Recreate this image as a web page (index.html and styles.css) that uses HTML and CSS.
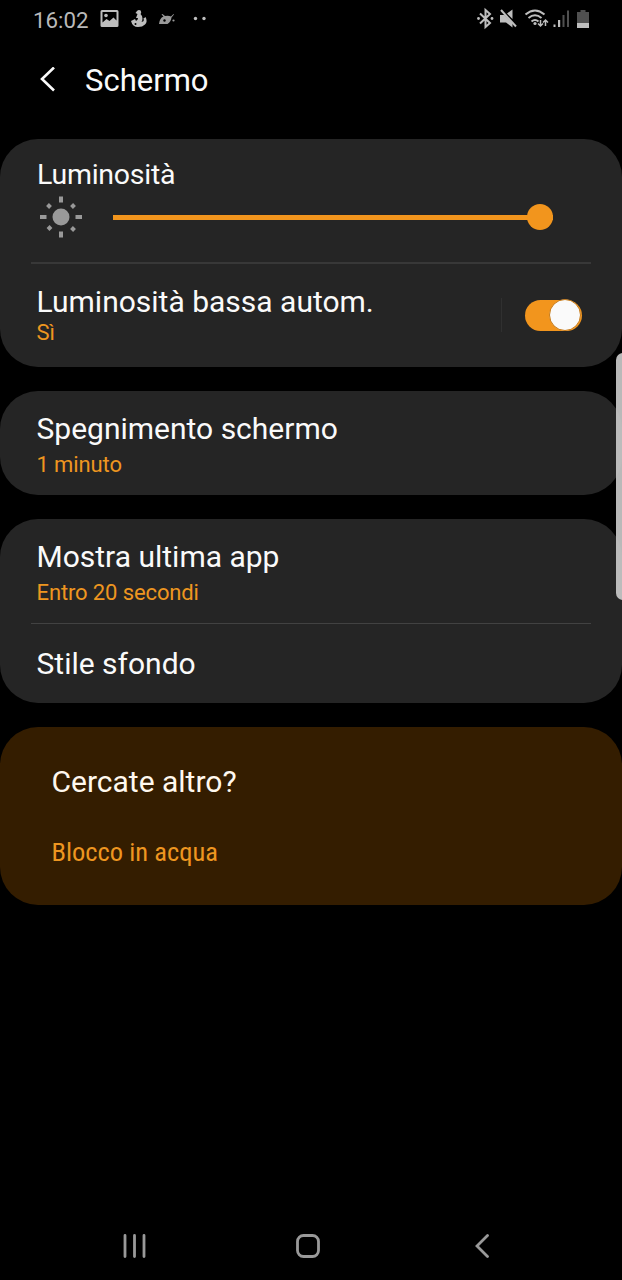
FILE: index.html
```html
<!DOCTYPE html>
<html lang="it">
<head>
    <meta charset="UTF-8">
    <meta name="viewport" content="width=device-width, initial-scale=1.0">
    <title>Schermo</title>
    <link rel="stylesheet" href="styles.css">
</head>
<body>

<div class="status-bar">
    <span class="time">16:02</span>
    <svg class="status-left" width="112" height="24" viewBox="98 7 112 24">
        <!-- picture -->
        <path fill-rule="evenodd" d="M102 10h15q1.500 0 1.500 1.500v14q0 1.500-1.500 1.500h-15q-1.500 0-1.500-1.500v-14q0-1.500 1.500-1.500zM102.500 12v10.500l4-3.500 3 2 4-3.500 3 3V12z"/>
        <circle cx="106" cy="15.500" r="1.800"/>
        <!-- swan -->
        <path d="M135.500 13l1.500-2q1-1 2-1 2.200 0 2.200 2.200 0 1-.7 1.800 2 1.500 2 4.500 0 2-1 3.500 2.500-.5 2.500-2.500l-1-.5 2.500-2q2.500 4.500-.5 7.500-2.500 2.500-7 2.500-5.500 0-7-6l4-2 1 2q2-1 2-3h-2l1.500-4z"/>
        <circle cx="135.500" cy="24" r="1" fill="#000"/>
        <!-- android head -->
        <path class="android" d="M159 24q.5-6 4.500-7.500l-2-2 1-.5 2.500 2q3.500-.8 6 .5l2.500-2.500.5.500-2.500 3q-.5 4-4 6.500z"/>
        <circle cx="164.500" cy="20.500" r="1.200" fill="#000"/>
        <circle class="android" cx="173.500" cy="20.500" r="1.100"/>
        <!-- more notifications -->
        <circle cx="195.500" cy="18.500" r="1.700"/>
        <circle cx="204" cy="18.500" r="1.700"/>
    </svg>
    <svg class="status-right" width="116" height="24" viewBox="476 7 116 24">
        <!-- bluetooth -->
        <path class="line" d="M480 13.500l10 9.500-4.500 4v-17l4.500 4-10 9.500"/>
        <circle cx="478.500" cy="18.500" r="1.400"/>
        <circle cx="492" cy="18.500" r="1.400"/>
        <!-- muted -->
        <path d="M500 15h4.500l8 8v4.500l-6.500-5h-6zM507 13.500l5.500-4v9.500z"/>
        <path class="line" d="M501 10l15 16.500"/>
        <!-- wifi -->
        <path class="line" d="M525.500 14.500q9.500-8 19 0M528.500 18q6.500-5.500 13 0M531.500 21.500q3.500-3 7 0"/>
        <circle cx="535" cy="23.500" r="1.600"/>
        <path class="thin" d="M540.500 20v6M538 23.500l2.500 2.500 2.500-2.500M545.500 26v-6M543 22.500l2.500-2.500 2.500 2.500"/>
        <!-- signal -->
        <path d="M553.500 24.500h2v2.500h-2zM558 20h2.200v7h-2.200z"/>
        <path class="dim" d="M562.500 15h2v12h-2zM567 10.500h2V27h-2z"/>
        <!-- battery -->
        <path class="dim" d="M577 12h3.500v-2h5v2h3.500v11h-12z"/>
        <path d="M577 23h12v5h-12z"/>
    </svg>
</div>

<div class="header">
    <svg width="16" height="26" viewBox="0 0 16 26">
        <path d="M14 .5L2 12l12 11.500"/>
    </svg>
    <h1>Schermo</h1>
</div>

<div class="card">
    <div class="brightness">
        <div class="label">Luminosità</div>
        <div class="slider-row">
            <svg width="42" height="42" viewBox="0 0 42 42">
                <circle cx="21" cy="21" r="8.500"/>
                <path class="ray" d="M21 .5v6M21 35.500v6M0 21h6.500M35.500 21H42"/>
                <path class="ray" d="M7.500 8.500l3 3M31.500 11.500l3-3M8 33.500l3-3M31.500 31.500l3 3"/>
            </svg>
            <div class="slider"><div class="thumb"></div></div>
        </div>
    </div>
    <div class="divider thick"></div>
    <div class="row auto">
        <div>
            <div class="title">Luminosità bassa autom.</div>
            <div class="value">Sì</div>
        </div>
        <div class="switch-box">
            <div class="switch"><div class="knob"></div></div>
        </div>
    </div>
</div>

<div class="card">
    <div class="row">
        <div class="title">Spegnimento schermo</div>
        <div class="value">1 minuto</div>
    </div>
</div>

<div class="card">
    <div class="row">
        <div class="title">Mostra ultima app</div>
        <div class="value">Entro 20 secondi</div>
    </div>
    <div class="divider"></div>
    <div class="row single">
        <div class="title">Stile sfondo</div>
    </div>
</div>

<div class="card more">
    <div class="title">Cercate altro?</div>
    <a class="link">Blocco in acqua</a>
</div>

<div class="nav-bar">
    <svg width="24" height="24" viewBox="0 0 24 24">
        <path d="M2 1.500v21M11.500 1.500v21M21 1.500v21"/>
    </svg>
    <svg width="24" height="24" viewBox="0 0 24 24">
        <rect x="1.500" y="1.500" width="21" height="21" rx="6"/>
    </svg>
    <svg width="24" height="24" viewBox="0 0 24 24">
        <path d="M17.500 1.500L7 12l10.500 10.500"/>
    </svg>
</div>

<div class="edge-handle"></div>

</body>
</html>
```
FILE: styles.css
```css
body {
    font-family: Roboto, sans-serif;
    display: flex;
    flex-direction: column;
    height: 1280px;
    margin: 0;
    background-color: #000;
    color: #fafafa;
    position: relative;
    overflow: hidden;
}
svg {
    display: block;
    flex: none;
}
.status-bar {
    display: flex;
    align-items: center;
    height: 38px;
    padding: 0 30px 0 33px;
    color: #b9b9b9;
}
.status-bar svg {
    fill: #bebebe;
}
.time {
    width: 65px;
    font-size: 22.3px;
    line-height: 26px;
    padding-top: 1px;
}
.status-right {
    margin-left: auto;
}
.status-bar .line {
    fill: none;
    stroke: #bebebe;
    stroke-width: 2;
}
.status-bar .thin {
    fill: none;
    stroke: #bebebe;
    stroke-width: 1.5;
}
.status-bar .dim {
    fill: #505050;
}
.status-bar .android {
    fill: #999;
}
.header {
    display: flex;
    align-items: center;
    gap: 29px;
    height: 83px;
    padding: 0 40px;
    margin-bottom: 18px;
}
.header svg {
    fill: none;
    stroke: #fafafa;
    stroke-width: 2.6;
}
h1 {
    margin: 0;
    padding-top: 2px;
    font-size: 31px;
    line-height: 36px;
    font-weight: 400;
}
.card {
    background-color: #252525;
    border-radius: 38px;
    margin-bottom: 24px;
}
.brightness {
    padding: 18px 37px 24px;
}
.label {
    font-size: 28.5px;
    line-height: 36px;
    letter-spacing: -0.25px;
}
.slider-row {
    display: flex;
    align-items: center;
    gap: 31px;
    margin-top: 3px;
    padding: 0 32px 0 3px;
}
.slider-row svg {
    fill: #999;
}
.ray {
    stroke: #999;
    stroke-width: 4;
}
.slider {
    display: flex;
    align-items: center;
    justify-content: flex-end;
    flex: 1;
    height: 5px;
    background-color: #f2951d;
}
.thumb {
    width: 26px;
    height: 26px;
    border-radius: 50%;
    background-color: #f2951d;
}
.divider {
    height: 1px;
    margin: 0 31px;
    background-color: #424242;
}
.divider.thick {
    height: 2px;
    background-color: #383838;
}
.row {
    padding: 21px 37px 17px 36.5px;
}
.title {
    font-size: 30px;
    line-height: 34px;
}
.value {
    margin-top: 6px;
    font-size: 22px;
    line-height: 26px;
    letter-spacing: -0.12px;
    color: #ee9620;
}
.row.auto {
    display: flex;
    justify-content: space-between;
    padding: 21px 40px 21px 36.5px;
}
.auto .value {
    margin-top: 1px;
}
.switch-box {
    display: flex;
    align-items: center;
    height: 34px;
    margin-top: 13px;
    padding-left: 23px;
    border-left: 1px solid #303030;
}
.switch {
    display: flex;
    align-items: center;
    justify-content: flex-end;
    width: 57px;
    height: 31px;
    border-radius: 16px;
    background-color: #f2951d;
}
.knob {
    width: 30px;
    height: 30px;
    border: 1.5px solid #c87a17;
    border-radius: 50%;
    background-color: #fafafa;
    margin-right: 1px;
}
.row.single {
    padding: 23px 37px 22px 36.5px;
}
.card.more {
    padding: 38px 51.5px;
    margin-bottom: 0;
    background-color: #341d00;
    color: #fff8ee;
}
.link {
    display: block;
    width: max-content;
    margin-top: 38px;
    font-family: "Roboto Condensed", Roboto, sans-serif;
    font-size: 26.5px;
    font-stretch: 75%;
    line-height: 30px;
    color: #ee9620;
}
.nav-bar {
    display: flex;
    justify-content: space-between;
    margin-top: auto;
    padding: 0 128px 22px 122.5px;
}
.nav-bar svg {
    fill: none;
    stroke: #999;
    stroke-width: 2.8;
    stroke-linecap: round;
}
.edge-handle {
    position: absolute;
    top: 353px;
    right: -8px;
    width: 14px;
    height: 247px;
    border-radius: 7px;
    background-color: rgba(205, 205, 205, 0.9);
}
```
